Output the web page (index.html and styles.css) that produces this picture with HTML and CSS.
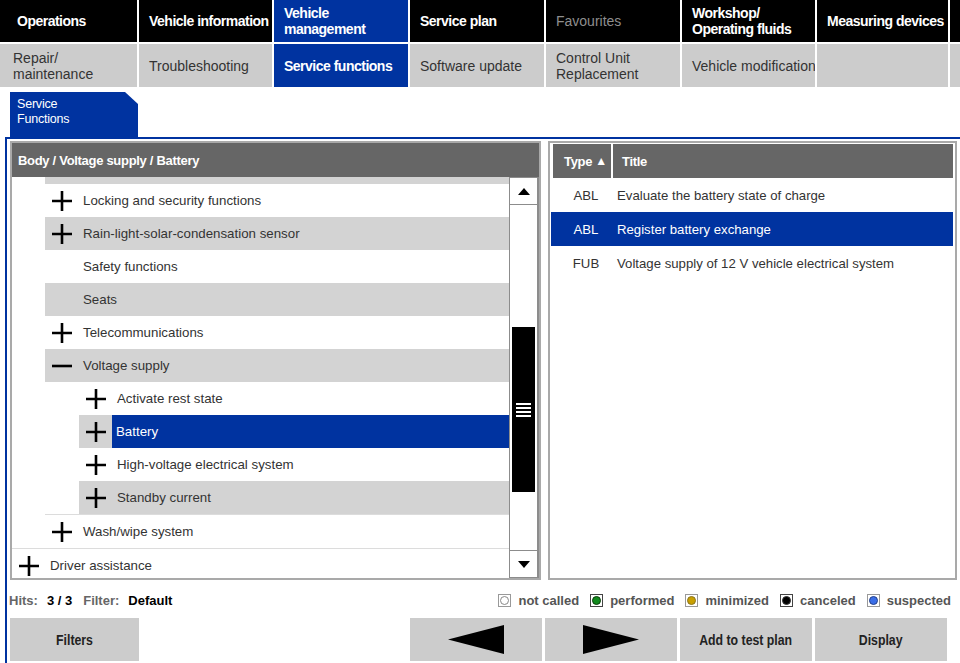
FILE: index.html
```html
<!DOCTYPE html>
<html>
<head>
<meta charset="utf-8">
<title>Service functions</title>
<link rel="stylesheet" href="styles.css">
</head>
<body>
<nav class="topnav">
  <a class="nav-cell main-cell first">Operations</a>
  <a class="nav-cell main-cell">Vehicle information</a>
  <a class="nav-cell main-cell active">Vehicle<br>management</a>
  <a class="nav-cell main-cell">Service plan</a>
  <a class="nav-cell main-cell disabled">Favourites</a>
  <a class="nav-cell main-cell">Workshop/<br>Operating fluids</a>
  <a class="nav-cell main-cell">Measuring devices</a>
  <a class="nav-cell main-cell"></a>

  <a class="nav-cell sub-cell first">Repair/<br>maintenance</a>
  <a class="nav-cell sub-cell">Troubleshooting</a>
  <a class="nav-cell sub-cell active">Service functions</a>
  <a class="nav-cell sub-cell">Software update</a>
  <a class="nav-cell sub-cell">Control Unit<br>Replacement</a>
  <a class="nav-cell sub-cell clip">Vehicle modification</a>
  <a class="nav-cell sub-cell"></a>
  <a class="nav-cell sub-cell"></a>
</nav>

<div class="tabs">
  <div class="tab">Service<br>Functions</div>
</div>

<main class="workspace">
  <div class="panels">
    <section class="panel tree-panel">
      <header class="panel-head">Body / Voltage supply / Battery</header>
      <div class="tree-body">
        <div class="tree">
          <ul class="tree-list">
            <li class="node top-group">
              <ul class="group">
                <li><div class="row alt"><span class="tog"></span><span class="lbl"></span></div></li>
                <li><div class="row"><span class="tog"><svg viewBox="0 0 20 20"><path d="M0 10H20M10 0V20"/></svg></span><span class="lbl">Locking and security functions</span></div></li>
                <li><div class="row alt"><span class="tog"><svg viewBox="0 0 20 20"><path d="M0 10H20M10 0V20"/></svg></span><span class="lbl">Rain-light-solar-condensation sensor</span></div></li>
                <li><div class="row"><span class="tog"></span><span class="lbl">Safety functions</span></div></li>
                <li><div class="row alt"><span class="tog"></span><span class="lbl">Seats</span></div></li>
                <li><div class="row"><span class="tog"><svg viewBox="0 0 20 20"><path d="M0 10H20M10 0V20"/></svg></span><span class="lbl">Telecommunications</span></div></li>
                <li class="open-node">
                  <div class="row alt"><span class="tog"><svg viewBox="0 0 20 20"><path d="M0 10H20"/></svg></span><span class="lbl">Voltage supply</span></div>
                  <ul class="group sub">
                    <li><div class="row"><span class="tog"><svg viewBox="0 0 20 20"><path d="M0 10H20M10 0V20"/></svg></span><span class="lbl">Activate rest state</span></div></li>
                    <li><div class="row alt"><span class="tog"><svg viewBox="0 0 20 20"><path d="M0 10H20M10 0V20"/></svg></span><span class="lbl selected">Battery</span></div></li>
                    <li><div class="row"><span class="tog"><svg viewBox="0 0 20 20"><path d="M0 10H20M10 0V20"/></svg></span><span class="lbl">High-voltage electrical system</span></div></li>
                    <li><div class="row alt"><span class="tog"><svg viewBox="0 0 20 20"><path d="M0 10H20M10 0V20"/></svg></span><span class="lbl">Standby current</span></div></li>
                  </ul>
                </li>
                <li><div class="row"><span class="tog"><svg viewBox="0 0 20 20"><path d="M0 10H20M10 0V20"/></svg></span><span class="lbl">Wash/wipe system</span></div></li>
              </ul>
            </li>
            <li><div class="row"><span class="tog"><svg viewBox="0 0 20 20"><path d="M0 10H20M10 0V20"/></svg></span><span class="lbl">Driver assistance</span></div></li>
          </ul>
        </div>
        <div class="scrollbar">
          <div class="sb-btn"><span class="arrow-up"></span></div>
          <div class="sb-track">
            <div class="sb-thumb">
              <span class="grip"></span><span class="grip"></span><span class="grip"></span><span class="grip"></span>
            </div>
          </div>
          <div class="sb-btn down"><span class="arrow-down"></span></div>
        </div>
      </div>
    </section>

    <section class="panel list-panel">
      <div class="list-head">
        <div class="col-type">Type <span class="sort">&#9650;</span></div>
        <div class="col-title">Title</div>
      </div>
      <div class="list-row"><span class="type">ABL</span><span class="title">Evaluate the battery state of charge</span></div>
      <div class="list-row selected"><span class="type">ABL</span><span class="title">Register battery exchange</span></div>
      <div class="list-row"><span class="type">FUB</span><span class="title">Voltage supply of 12 V vehicle electrical system</span></div>
    </section>
  </div>

  <div class="status">
    <div class="hits">
      <span class="key">Hits:</span><span class="val">3 / 3</span>
      <span class="key">Filter:</span><span class="val">Default</span>
    </div>
    <ul class="legend">
      <li><span class="box"><span class="dot not-called"></span></span>not called</li>
      <li><span class="box dark"><span class="dot performed"></span></span>performed</li>
      <li><span class="box"><span class="dot minimized"></span></span>minimized</li>
      <li><span class="box dark"><span class="dot canceled"></span></span>canceled</li>
      <li><span class="box"><span class="dot suspected"></span></span>suspected</li>
    </ul>
  </div>

  <div class="actions">
    <button class="btn filters"><span class="btn-label">Filters</span></button>
    <div class="btn-group">
      <button class="btn"><svg class="nav-arrow" viewBox="0 0 56 29"><polygon points="0,14.5 56,0 56,29"/></svg></button>
      <button class="btn"><svg class="nav-arrow" viewBox="0 0 56 29"><polygon points="56,14.5 0,0 0,29"/></svg></button>
      <button class="btn"><span class="btn-label">Add to test plan</span></button>
      <button class="btn"><span class="btn-label">Display</span></button>
    </div>
  </div>
</main>
</body>
</html>
```

FILE: styles.css
```css
* {
  box-sizing: border-box;
  margin: 0;
  padding: 0;
}

html, body {
  width: 960px;
  height: 663px;
  overflow: hidden;
  background: #fff;
}

body {
  font-family: "Liberation Sans", Arial, sans-serif;
  color: #333;
}

ul {
  list-style: none;
}

/* ---------- top navigation ---------- */
.topnav {
  display: grid;
  grid-template-columns: 137px 133px 134px 134px 134px 133px 131px 1fr;
  grid-template-rows: 42px 43px;
  gap: 2px;
  height: 87px;
}

.nav-cell {
  display: flex;
  align-items: center;
  padding-left: 10px;
  line-height: 16px;
  white-space: nowrap;
  overflow: hidden;
}

.main-cell {
  background: #000;
  color: #fff;
  font-size: 14px;
  font-weight: bold;
  letter-spacing: -0.5px;
}

.main-cell.first {
  padding-left: 17px;
}

.main-cell.disabled {
  color: #8e8e8e;
  font-weight: normal;
  font-size: 14px;
  letter-spacing: 0;
}

.sub-cell {
  background: #cccccc;
  color: #333;
  font-size: 14px;
}

.sub-cell.first {
  padding-left: 13px;
}

.nav-cell.active {
  background: #0033a0;
  color: #fff;
}

.sub-cell.active {
  font-weight: bold;
  letter-spacing: -0.5px;
}

/* ---------- tab ---------- */
.tabs {
  height: 50px;
  padding: 5px 0 0 10px;
}

.tab {
  width: 128px;
  height: 45px;
  background: #0033a0;
  color: #fff;
  font-size: 12.5px;
  letter-spacing: -0.2px;
  line-height: 15px;
  padding: 5px 7px;
  clip-path: polygon(0 0, calc(100% - 13px) 0, 100% 12px, 100% 100%, 0 100%);
}

/* ---------- workspace ---------- */
.workspace {
  margin-left: 5px;
  height: 526px;
  border-top: 2px solid #0033a0;
  border-left: 2px solid #0033a0;
  padding: 2px 3px 0 3px;
}

.panels {
  display: flex;
  gap: 7px;
  height: 439px;
}

.panel {
  border: 2px solid #a9a9a9;
  background: #fff;
}

.tree-panel {
  width: 531px;
  display: flex;
  flex-direction: column;
}

.list-panel {
  flex: 1;
  padding: 1px 2px 0 1px;
}

.panel-head {
  height: 34px;
  background: #666;
  color: #fff;
  font-size: 13px;
  letter-spacing: -0.3px;
  font-weight: bold;
  display: flex;
  align-items: center;
  padding-left: 6px;
}

.tree-body {
  flex: 1;
  display: flex;
  min-height: 0;
}

.tree {
  flex: 1;
  overflow: hidden;
}

.tree-list {
  margin-top: -26px;
}

.top-group {
  border-bottom: 1px solid #dcdcdc;
}

.group {
  padding-left: 33px;
}

.group.sub {
  padding-left: 34px;
}

.open-node {
  border-bottom: 1px solid #dcdcdc;
}

.row {
  display: flex;
  height: 33px;
  align-items: stretch;
  font-size: 13.3px;
  color: #333;
}

.row.alt {
  background: #d3d3d3;
}

.tog {
  width: 33px;
  flex: none;
  display: flex;
  align-items: center;
  justify-content: center;
}

.tog svg {
  width: 20px;
  height: 20px;
  stroke: #000;
  stroke-width: 2.6;
  fill: none;
}

.lbl {
  flex: 1;
  display: flex;
  align-items: center;
  padding-left: 5px;
  white-space: nowrap;
}

.lbl.selected {
  background: #0033a0;
  color: #fff;
  padding-left: 4px;
}

/* ---------- scrollbar ---------- */
.scrollbar {
  width: 30px;
  flex: none;
  border: 1px solid #8c8c8c;
  border-right-width: 2px;
  display: flex;
  flex-direction: column;
  background: #fff;
}

.sb-btn {
  height: 27px;
  flex: none;
  display: flex;
  align-items: center;
  justify-content: center;
  border-bottom: 1px solid #8c8c8c;
}

.sb-btn.down {
  border-bottom: none;
  border-top: 1px solid #8c8c8c;
}

.arrow-up {
  width: 0;
  height: 0;
  border-left: 6px solid transparent;
  border-right: 6px solid transparent;
  border-bottom: 7px solid #000;
}

.arrow-down {
  width: 0;
  height: 0;
  border-left: 6px solid transparent;
  border-right: 6px solid transparent;
  border-top: 7px solid #000;
}

.sb-track {
  flex: 1;
  display: flex;
  flex-direction: column;
}

.sb-thumb {
  margin: 122px 2px 0 2px;
  height: 165px;
  background: #000;
  display: flex;
  flex-direction: column;
  align-items: center;
  justify-content: center;
  gap: 2px;
}

.grip {
  width: 15px;
  height: 2px;
  background: #fff;
}

/* ---------- list ---------- */
.list-head {
  display: flex;
  height: 34px;
  margin-left: 2px;
  gap: 2px;
  color: #fff;
  font-size: 13px;
  letter-spacing: -0.3px;
  font-weight: bold;
}

.col-type, .col-title {
  background: #666;
  display: flex;
  align-items: center;
}

.col-type {
  width: 58px;
  padding-left: 11px;
  gap: 3px;
}

.sort {
  font-size: 12px;
}

.col-title {
  flex: 1;
  padding-left: 9px;
}

.list-row {
  display: flex;
  align-items: center;
  height: 34px;
  font-size: 13.2px;
  color: #333;
}

.list-row.selected {
  background: #0033a0;
  color: #fff;
}

.list-row .type {
  width: 62px;
  text-align: center;
  padding-left: 8px;
}

.list-row .title {
  padding-left: 4px;
  white-space: nowrap;
}

/* ---------- status ---------- */
.status {
  margin-top: 10px;
  height: 20px;
  display: flex;
  align-items: center;
  justify-content: space-between;
  font-size: 13px;
  font-weight: bold;
  padding-right: 6px;
}

.hits {
  margin-left: -1px;
  display: flex;
  align-items: center;
}

.hits .key {
  color: #666;
  margin-right: 9px;
}

.hits .val {
  color: #000;
  margin-right: 11px;
}

.legend {
  display: flex;
  align-items: center;
  gap: 11px;
  color: #555;
}

.legend li {
  display: flex;
  align-items: center;
  gap: 7px;
}

.box {
  width: 13px;
  height: 13px;
  border: 1px solid #999;
  display: flex;
  align-items: center;
  justify-content: center;
  background: #fff;
}

.box.dark {
  border-color: #444;
}

.dot {
  width: 9px;
  height: 9px;
  border-radius: 50%;
  border: 1px solid #333;
}

.dot.not-called {
  background: #fff;
  border-color: #888;
}

.dot.performed {
  background: #118a1d;
  border-color: #0a3d0a;
}

.dot.minimized {
  background: #c9a000;
  border-color: #8a7420;
}

.dot.canceled {
  background: #000;
}

.dot.suspected {
  background: #3a6ee8;
  border-color: #24418a;
}

/* ---------- actions ---------- */
.actions {
  margin-top: 8px;
  display: flex;
  justify-content: space-between;
  padding-right: 10px;
  height: 43px;
}

.btn-group {
  display: flex;
  gap: 3px;
}

.btn {
  width: 132px;
  height: 43px;
  border: none;
  background: #cccccc;
  font-family: "Liberation Sans", Arial, sans-serif;
  color: #222;
  display: flex;
  align-items: center;
  justify-content: center;
}

.btn.filters {
  width: 129px;
}

.btn-label {
  display: inline-block;
  font-size: 15px;
  font-weight: bold;
  transform: scaleX(0.82);
  white-space: nowrap;
}

.nav-arrow {
  width: 56px;
  height: 29px;
  fill: #000;
}
```
